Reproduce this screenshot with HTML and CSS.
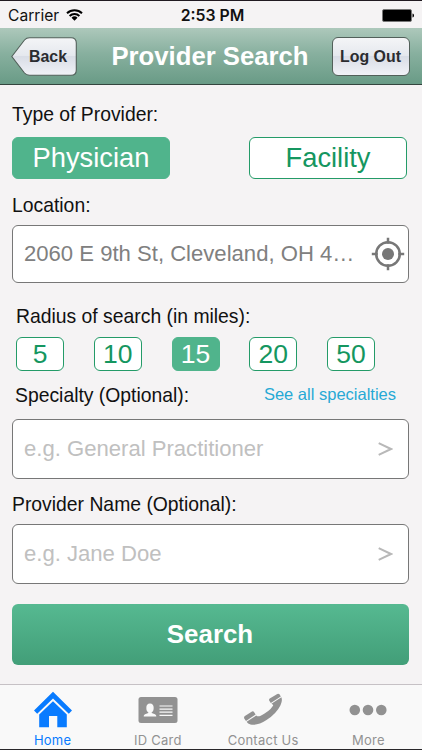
FILE: index.html
```html
<!DOCTYPE html>
<html lang="en">
  <head>
    <meta charset="UTF-8" />
    <meta name="viewport" content="width=device-width, initial-scale=1.0" />
    <title>Provider Search</title>
    <link rel="stylesheet" href="styles.css">
  </head>
  <body>
    <div class="screen">
      <div class="status-bar">
        <div class="carrier">
          <span>Carrier</span>
          <svg class="wifi" width="17" height="12" viewBox="0 0 17 12">
            <path d="M1 4.2a10.8 10.8 0 0 1 15 0M3.6 7a7 7 0 0 1 9.8 0" fill="none" stroke="#000" stroke-width="2" />
            <path d="M5.5 8.8a4.3 4.3 0 0 1 6 0l-3 3z" />
          </svg>
        </div>
        <span class="time">2:53 PM</span>
        <div class="battery">
          <svg width="33" height="13" viewBox="0 0 33 13">
            <rect x=".5" y=".5" width="29" height="12" rx="1.5" fill="#000" stroke="#777" />
            <path d="M30.5 4.5c2 .4 2 3.6 0 4z" />
          </svg>
        </div>
      </div>

      <header class="navbar">
        <button class="nav-button back">
          <svg class="back-shape" width="66" height="39" viewBox="0 0 66 39">
            <defs>
              <linearGradient id="backFill" x1="0" y1="0" x2="0" y2="1">
                <stop offset="0" stop-color="#f4f5f7" />
                <stop offset=".48" stop-color="#e5e8ee" />
                <stop offset=".5" stop-color="#d9dde6" />
                <stop offset="1" stop-color="#f0f2f7" />
              </linearGradient>
            </defs>
            <path d="M.8 19.5 13.5 3Q15.5.7 18.5.7H60Q65.3.7 65.3 6V33Q65.3 38.3 60 38.3H18.5Q15.5 38.3 13.5 36Z" fill="url(#backFill)" stroke="#52605a" stroke-width="1.1" />
          </svg>
          <span>Back</span>
        </button>
        <h1>Provider Search</h1>
        <button class="nav-button logout">Log Out</button>
      </header>

      <main class="search-form">
        <div class="label">Type of Provider:</div>
        <div class="type-buttons">
          <button class="option active">Physician</button>
          <button class="option">Facility</button>
        </div>

        <div class="label">Location:</div>
        <div class="field location">
          <span>2060 E 9th St, Cleveland, OH 4…</span>
          <svg class="target" width="34" height="34" viewBox="0 0 34 34">
            <circle cx="17" cy="17" r="6" fill="#777" />
            <circle cx="17" cy="17" r="11.8" fill="none" stroke="#777" stroke-width="2.5" />
            <path d="M17 .8v6M17 27.2v6M.8 17h6M27.2 17h6" stroke="#777" stroke-width="2.5" />
          </svg>
        </div>

        <div class="label radius-label">Radius of search (in miles):</div>
        <div class="radius-buttons">
          <button class="option">5</button>
          <button class="option">10</button>
          <button class="option active">15</button>
          <button class="option">20</button>
          <button class="option">50</button>
        </div>

        <div class="label specialty-label">
          <span>Specialty (Optional):</span>
          <a class="see-all">See all specialties</a>
        </div>
        <div class="field">
          <span class="placeholder">e.g. General Practitioner</span>
          <svg class="arrow" width="15" height="14" viewBox="0 0 15 14">
            <path d="M.7 1.2 13 7 .7 12.8" />
          </svg>
        </div>

        <div class="label">Provider Name (Optional):</div>
        <div class="field name-field">
          <span class="placeholder">e.g. Jane Doe</span>
          <svg class="arrow" width="15" height="14" viewBox="0 0 15 14">
            <path d="M.7 1.2 13 7 .7 12.8" />
          </svg>
        </div>

        <button class="search-button">Search</button>
      </main>

      <nav class="tab-bar">
        <a class="tab active">
          <svg width="40" height="38" viewBox="0 0 40 38">
            <path d="M20 .8 39 19.5l-3.2 3.3L20 7.5 4.2 22.8 1 19.5z" />
            <path d="M20 10.300 33.800 23.500V36.300H24.300V25H16V36.300H6.200V23.500z" />
          </svg>
          <span>Home</span>
        </a>
        <a class="tab">
          <svg width="40" height="38" viewBox="0 0 40 38">
            <rect x=".5" y="6" width="39" height="26" rx="2.5" />
            <g fill="#f9f9f9">
              <ellipse cx="12" cy="17" rx="3.7" ry="4.5" />
              <path d="M10.3 19h3.4v3l3.3 1.2q1.500.8 1.300 2.300H5.700q-.2-1.500 1.300-2.300l3.300-1.200z" />
            </g>
            <path d="M21.5 15h13M21.5 18.100h13M21.5 21.200h13M21.5 24.300h13" stroke="#f9f9f9" stroke-width="1.2" />
          </svg>
          <span>ID Card</span>
        </a>
        <a class="tab">
          <svg width="40" height="38" viewBox="0 0 40 38">
            <path d="M1.200 27.400Q.5 26 1.900 25L9 20.500Q10.300 19.800 11 21L12.600 23.600 3 29.900z" />
            <path d="M3.600 30.800 13.200 24.500Q15 26 17.200 24.900 26.500 20.500 30 14.800 30.700 13.600 28.400 12.800L38.400 6.300Q39.700 10 37.500 14.200 33.500 22.500 23.500 29 14.500 34.800 7.500 33.500 4.800 32.800 3.600 30.800z" />
            <path d="M27.800 11.900 26.200 9.500Q25.600 8.300 26.700 7.500L34.300 2.900Q35.700 2.200 36.500 3.300L37.800 5.400z" />
          </svg>
          <span>Contact Us</span>
        </a>
        <a class="tab">
          <svg width="40" height="38" viewBox="0 0 40 38">
            <circle cx="6.8" cy="19" r="5.3" />
            <circle cx="20" cy="19" r="5.3" />
            <circle cx="33.3" cy="19" r="5.3" />
          </svg>
          <span>More</span>
        </a>
      </nav>
    </div>
  </body>
</html>
```
FILE: styles.css
```css
* {
  box-sizing: border-box;
}
body {
  margin: 0;
  font-family: "Liberation Sans", Arial, sans-serif;
  background-color: #f5f3f4;
  color: #111;
}
button {
  margin: 0;
  padding: 0;
  font-family: inherit;
}
.screen {
  display: flex;
  flex-direction: column;
  height: 750px;
  border-top: 1px solid #211a21;
  border-bottom: 1px solid #29272a;
  overflow: hidden;
}

/* Status bar */
.status-bar {
  display: grid;
  grid-template-columns: 1fr auto 1fr;
  align-items: center;
  height: 27px;
  padding: 1px 7px 0 8px;
  font-family: Inter, sans-serif;
  font-size: 15.6px;
  color: #111;
}
.carrier {
  display: flex;
  align-items: center;
  gap: 7px;
}
.time {
  font-size: 15.8px;
  font-weight: 600;
  padding-left: 2px;
}
.battery {
  display: flex;
  justify-content: flex-end;
}

/* Navigation bar */
.navbar {
  display: flex;
  align-items: center;
  justify-content: space-between;
  height: 57px;
  padding: 0 12px 0 11px;
  background: linear-gradient(#adc8bb, #88b09f 45%, #699b86);
  border-bottom: 1px solid #34453e;
}
.navbar h1 {
  margin: 0 0 0 11px;
  font-size: 25.7px;
  line-height: 30px;
  color: white;
}
.nav-button {
  height: 39px;
  border: none;
  background: none;
  font-size: 15.9px;
  font-weight: bold;
  color: #2b2c30;
}
.back {
  display: grid;
  align-items: center;
  width: 66px;
}
.back > * {
  grid-area: 1 / 1;
}
.back span {
  padding: 1px 0 0 8px;
}
.logout {
  width: 78px;
  padding: 1px 1px 0 0;
  border: 1px solid #52605a;
  border-radius: 6px;
  background: linear-gradient(#f4f5f7, #e5e8ee 48%, #d9dde6 50%, #f0f2f7);
}

/* Form */
.search-form {
  display: flex;
  flex-direction: column;
  flex: 1;
  padding: 18px 13px 0 12px;
}
.label {
  height: 22px;
  font-size: 19.35px;
  line-height: 22px;
  white-space: nowrap;
}
.option {
  border: 1.5px solid #249b68;
  border-radius: 6px;
  background-color: white;
  color: #159660;
  font-size: 27.3px;
  line-height: 1;
}
.option.active {
  border-color: #50b48c;
  background-color: #50b48c;
  color: white;
}
.type-buttons {
  display: flex;
  justify-content: space-between;
  margin: 12px 2px 15px 0;
}
.type-buttons .option {
  width: 158px;
  height: 42px;
}
.field {
  display: flex;
  align-items: center;
  justify-content: space-between;
  height: 60px;
  margin: 13px 0 14px;
  padding: 0 15px 0 11px;
  border: 1px solid #777;
  border-radius: 6px;
  background-color: white;
  font-size: 22.1px;
  white-space: nowrap;
}
.location {
  height: 58px;
  margin: 9px 0 22px;
  padding-right: 3px;
  color: #808080;
}
.placeholder {
  color: #c0c0c0;
}
.arrow {
  fill: none;
  stroke: #b8b8b8;
  stroke-width: 2;
}
.radius-label {
  padding-left: 4px;
}
.radius-buttons {
  display: flex;
  justify-content: space-between;
  margin: 10px 34px 13px 4px;
}
.radius-buttons .option {
  width: 48px;
  height: 34px;
  font-size: 26.5px;
}
.specialty-label {
  display: flex;
  justify-content: space-between;
  padding: 0 13px 0 3px;
}
.see-all {
  font-size: 16.5px;
  line-height: 20px;
  color: #27a9d5;
}
.name-field {
  margin: 9px 0 20px;
}
.search-button {
  height: 61px;
  padding-right: 1px;
  border: none;
  border-radius: 6px;
  background: linear-gradient(#56b991, #429e78);
  color: white;
  font-size: 25.9px;
  font-weight: bold;
}

/* Tab bar */
.tab-bar {
  display: grid;
  grid-template-columns: repeat(4, 1fr);
  height: 65px;
  padding-right: 1px;
  border-top: 1px solid #c6c1c5;
  background-color: #f9f9f9;
}
.tab {
  display: flex;
  flex-direction: column;
  align-items: center;
  padding-top: 6px;
  color: #929292;
  fill: currentColor;
  font-family: Inter, sans-serif;
  font-size: 13px;
  line-height: 16px;
  letter-spacing: 0.25px;
}
.tab span {
  margin-top: 3px;
}
.tab.active {
  color: #087bff;
}
```
